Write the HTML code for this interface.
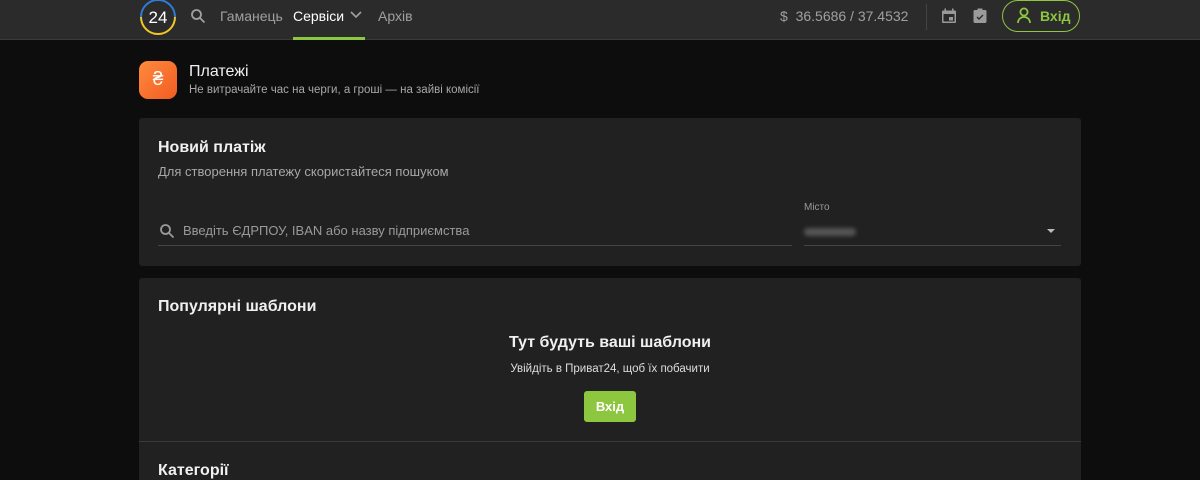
<!DOCTYPE html>
<html><head><meta charset="utf-8"><style>
*{margin:0;padding:0;box-sizing:border-box}
html,body{width:1200px;height:480px;overflow:hidden}
body{background:#0d0d0d;font-family:"Liberation Sans","DejaVu Sans",sans-serif;color:#e6e6e6;position:relative}
.hdr{position:absolute;left:0;top:0;width:1200px;height:40px;background:#2b2b2b;border-bottom:1px solid #3a3a3a}
.a{position:absolute}
.nav{font-size:14px;color:#a0a0a0;top:8px}
.card{position:absolute;left:139px;width:942px;background:#212121;border-radius:3px}
</style></head><body>
<div class="hdr">
 <svg class="a" style="left:139px;top:-2px" width="38" height="38" viewBox="0 0 38 38"><path d="M2 19A17 17 0 0 1 36 19" fill="none" stroke="#2e7bd6" stroke-width="2"/><path d="M2 19A17 17 0 0 0 36 19" fill="none" stroke="#f3c623" stroke-width="2"/><text x="19" y="25" font-size="17" fill="#fff" text-anchor="middle" font-family="Liberation Sans">24</text></svg>
 <svg class="a" style="left:190px;top:8px" width="16" height="16" viewBox="0 0 16 16"><circle cx="6.5" cy="6.5" r="4.5" fill="none" stroke="#a0a0a0" stroke-width="1.8"/><path d="M10 10l4.5 4.5" stroke="#a0a0a0" stroke-width="1.8"/></svg>
 <div class="a nav" style="left:220px">Гаманець</div>
 <div class="a nav" style="left:293px;color:#fff">Сервіси</div>
 <svg class="a" style="left:350px;top:11px" width="12" height="8" viewBox="0 0 12 8"><path d="M1 1l5 5 5-5" fill="none" stroke="#a0a0a0" stroke-width="1.6"/></svg>
 <div class="a" style="left:293px;top:37px;width:72px;height:3px;background:#8dc63f"></div>
 <div class="a nav" style="left:378px">Архів</div>
 <div class="a nav" style="left:780px">$&nbsp; 36.5686 / 37.4532</div>
 <div class="a" style="left:926px;top:4px;width:1px;height:26px;background:#444"></div>
 <svg class="a" style="left:941px;top:8px" width="16" height="16" viewBox="0 0 16 16"><rect x="1" y="2.5" width="14" height="12.5" rx="1" fill="#9a9a9a"/><rect x="2.5" y="6" width="11" height="7.5" fill="#2b2b2b"/><rect x="8" y="9" width="4" height="3.5" fill="#9a9a9a"/><rect x="3.5" y="0.5" width="1.5" height="3" fill="#9a9a9a"/><rect x="11" y="0.5" width="1.5" height="3" fill="#9a9a9a"/></svg>
 <svg class="a" style="left:973px;top:8px" width="14" height="16" viewBox="0 0 14 16"><rect x="0.5" y="2" width="13" height="13" rx="1.5" fill="#9a9a9a"/><rect x="4.5" y="0.5" width="5" height="3" fill="#9a9a9a"/><path d="M4 9l2 2 4-4" fill="none" stroke="#2b2b2b" stroke-width="1.4"/></svg>
 <div class="a" style="left:1002px;top:0px;width:78px;height:32px;border:1px solid #8dc63f;border-radius:16px"></div>
 <svg class="a" style="left:1016px;top:7px" width="16" height="17" viewBox="0 0 16 17"><circle cx="8" cy="5" r="3.6" fill="none" stroke="#8dc63f" stroke-width="1.8"/><path d="M2 16c0-4 3-6 6-6s6 2 6 6" fill="none" stroke="#8dc63f" stroke-width="1.8"/></svg>
 <div class="a" style="left:1040px;top:8px;font-size:14px;font-weight:bold;color:#8dc63f">Вхід</div>
</div>
<div class="a" style="left:139px;top:61px;width:38px;height:38px;border-radius:9px;background:linear-gradient(135deg,#ff8a3d,#f25c22);color:#fff;font-size:19px;text-align:center;line-height:38px">₴</div>
<div class="a" style="left:189px;top:63px;font-size:16px;color:#f0f0f0">Платежі</div>
<div class="a" style="left:189px;top:84px;font-size:11.5px;color:#a8a8a8">Не витрачайте час на черги, а гроші — на зайві комісії</div>
<div class="card" style="top:118px;height:148px">
 <div class="a" style="left:19px;top:21px;font-size:16px;font-weight:bold;color:#f0f0f0">Новий платіж</div>
 <div class="a" style="left:19px;top:46px;font-size:13px;color:#a8a8a8">Для створення платежу скористайтеся пошуком</div>
 <svg class="a" style="left:20px;top:105px" width="16" height="16" viewBox="0 0 16 16"><circle cx="6.5" cy="6.5" r="4.5" fill="none" stroke="#9a9a9a" stroke-width="1.8"/><path d="M10 10l4.5 4.5" stroke="#9a9a9a" stroke-width="1.8"/></svg>
 <div class="a" style="left:44px;top:105px;font-size:13px;color:#9a9a9a">Введіть ЄДРПОУ, IBAN або назву підприємства</div>
 <div class="a" style="left:19px;top:127px;width:634px;height:1px;background:#444"></div>
 <div class="a" style="left:665px;top:84px;font-size:10px;color:#9a9a9a">Місто</div>
 <div class="a" style="left:665px;top:110px;width:52px;height:8px;background:#555;border-radius:4px;filter:blur(2px)"></div>
 <div class="a" style="left:908px;top:111px;width:0;height:0;border-left:4.5px solid transparent;border-right:4.5px solid transparent;border-top:4.5px solid #bbb"></div>
 <div class="a" style="left:665px;top:127px;width:257px;height:1px;background:#444"></div>
</div>
<div class="card" style="top:278px;height:220px">
 <div class="a" style="left:19px;top:20px;font-size:16px;font-weight:bold;color:#f0f0f0">Популярні шаблони</div>
 <div class="a" style="left:0;width:942px;top:56px;text-align:center;font-size:16px;font-weight:bold;color:#f0f0f0">Тут будуть ваші шаблони</div>
 <div class="a" style="left:0;width:942px;top:85px;text-align:center;font-size:11.5px;color:#ddd">Увійдіть в Приват24, щоб їх побачити</div>
 <div class="a" style="left:445px;top:113px;width:52px;height:31px;background:#8dc63f;border-radius:3px;color:#fff;font-size:13px;font-weight:bold;text-align:center;line-height:31px">Вхід</div>
 <div class="a" style="left:0;top:163px;width:942px;height:1px;background:#3a3a3a"></div>
 <div class="a" style="left:19px;top:184px;font-size:16px;font-weight:bold;color:#f0f0f0">Категорії</div>
</div>
</body></html>
